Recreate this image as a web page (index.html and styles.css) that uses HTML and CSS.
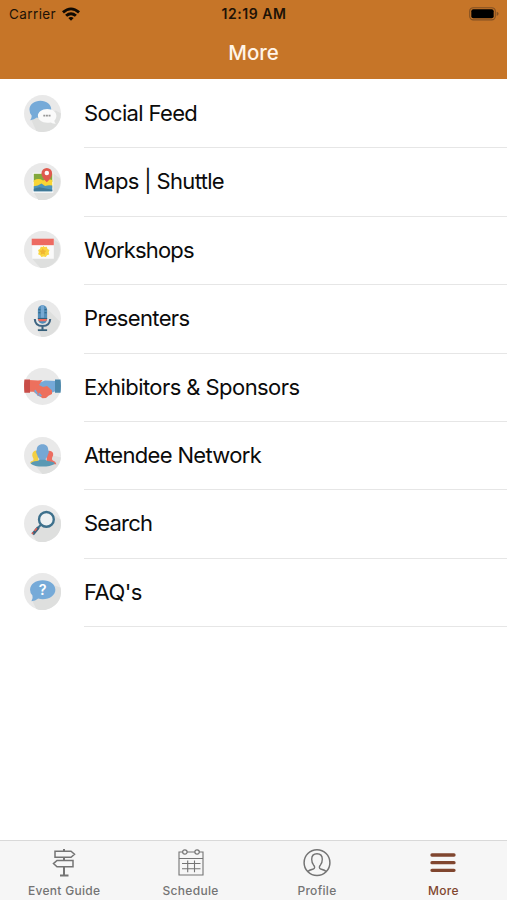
FILE: index.html
```
<!DOCTYPE html>
<html lang="en">
<head>
<meta charset="utf-8">
<title>More</title>
<link rel="stylesheet" href="styles.css">
</head>
<body>
<div class="screen">
  <header class="header">
    <div class="status">
      <div class="carrier"><span>Carrier</span>
        <svg class="wifi" viewBox="0 0 18 14"><path d="M0 4.300Q9-3.500 18 4.300L16.100 6.400Q9 .3 1.900 6.400ZM3.100 7.700Q9 2.800 14.900 7.700L12.900 9.800Q9 6.600 5.100 9.800ZM6.300 11Q9 8.900 11.700 11L9 13.800Z"/></svg>
      </div>
      <span class="time">12:19 AM</span>
      <svg class="battery" viewBox="0 0 30 14"><rect x=".7" y=".7" width="25.600" height="12.200" rx="3.600" fill="none" stroke="#825023" stroke-width="1.100"/><rect x="2.300" y="2.300" width="22.400" height="9" rx="2" fill="#000"/><path d="M27.700 4.700Q29.600 5.300 29.600 6.800T27.700 8.900Z" fill="#825023"/></svg>
    </div>
    <h1 class="title">More</h1>
  </header>
  <ul class="list">
    <li class="row"><svg class="icon" viewBox="0 0 36 36"><circle class="disc" cx="18" cy="18" r="18"/><path class="shade" d="M31 15 36 18A18 18 0 0 1 12 35L7 24Z"/><path class="blue" d="M16 5.500c6 0 10.500 3.600 10.500 8.400S22 22.500 16 22.500q-2 0-3.500-.5-2.500 2.300-6.500 2.500 1.600-2 1.500-4.300Q5.300 17.700 5.300 14C5.300 9.100 10 5.500 16 5.500Z"/><path class="white" d="M22.500 13.500c5.300 0 9 2.800 9 6.700 0 2-.8 3.700-2 4.800q0 1.600 1.500 3-3 0-5-1.300-1.500.4-3.500.4c-5 0-9-2.800-9-6.800s4-6.800 9-6.800Z"/><path d="M18.800 20h7" stroke="#969696" stroke-width="1.700" stroke-dasharray="1.900 .650"/></svg><span class="label l1">Social Feed</span></li>
    <li class="row"><svg class="icon" viewBox="0 0 36 36"><circle class="disc" cx="18" cy="18" r="18"/><path class="shade" d="M27 9 35 15A18 18 0 0 1 14 36L9 28Z"/><path class="white" d="M8.500 9.500h20V29h-20Z"/><path fill="#82a83d" d="M9.500 10.500h18v8h-18Z"/><path fill="#f9d535" d="M9.500 17q4.500-2.800 9 0 4-2 9-.5v7.500h-18Z"/><path fill="#4d94ba" d="M9.500 22.500q4 0 7.500-2.500l3.500 2.400q3.500-1.500 7-.4v5.500h-18Z"/><path fill="#3e7897" d="m9.500 25 5.500-1.500 12.500 2.500v1.500h-18Z"/><path fill="#df594e" d="M22.200 18.700q-5.200-5-5.200-8.600a5.200 5.200 0 0 1 10.400 0q0 3.600-5.200 8.600Z"/><circle class="white" cx="22.200" cy="9.800" r="2.200"/></svg><span class="label l2">Maps | Shuttle</span></li>
    <li class="row"><svg class="icon" viewBox="0 0 36 36"><circle class="disc" cx="18" cy="18" r="18"/><path class="shade" d="m29 8 5 4A18 18 0 0 1 16 36l-8-9Z"/><path class="white" d="M8 8h21v19H8Z"/><path fill="#ed6a61" d="M7.500 7.500h21.500v6.300H7.500Z"/><path fill="#f9d642" d="m18.300 14.200 1.700 1.300 2.200-.2.700 2.100 1.900 1.200-.8 2 .5 2.200-2.100.7-1.200 1.900-2.100-.6-2.200.6-1.100-1.900-2.100-.8.700-2.100-.7-2 1.800-1.200.8-2.100 2.200.2Z"/><path fill="#f0b632" d="m18.300 16.700 1.100 2.100 2.400.4-1.700 1.700.4 2.300-2.200-1.100-2.100 1.100.4-2.300-1.700-1.700 2.300-.4Z"/></svg><span class="label l3">Workshops</span></li>
    <li class="row"><svg class="icon" viewBox="0 0 36 36"><circle class="disc" cx="18" cy="18" r="18"/><path class="shade" d="m23 9 12 12A18 18 0 0 1 17 36l-4-7Z"/><path fill="none" stroke="#3e6482" stroke-width="2" d="M10.500 18.500q.3 6.800 7.500 6.800t7.500-6.800M18 25v4"/><path fill="#345f7a" d="M13.500 28.500h9v1.700h-9Z"/><rect x="13.500" y="5" width="9" height="18" rx="4.500" fill="#528db9"/><path fill="#77a9d3" d="M16.500 5.200h3v12h-3Z"/><path fill="#2e617f" d="M14 9h2v1h-2Zm0 3h2v1h-2Zm6-3h2v1h-2Zm0 3h2v1h-2Z"/><path fill="#ed6b5d" d="M13.500 18h9q-.2 2-1.200 2.700h-6.600q-1-.7-1.200-2.700Z"/><path d="M13.500 18h9" stroke="#345f7a"/></svg><span class="label l4">Presenters</span></li>
    <li class="row"><svg class="icon" viewBox="0 0 37 37"><circle class="disc" cx="18.500" cy="18.500" r="18.500"/><path fill="#75a9d9" d="m15 15 6-2.500 11 .5v10l-5 2-7 5-7-2.500Z"/><path fill="#ed705d" d="m5 12 9 .5 4.500-.5L15 17l4 2 4-1 5 4.500v3.500l-3.500 1.700-2.500 2.200-3.500.4-9-6.500H5Z"/><path fill="#c94d48" d="M.4 11.500H6v13.200H.4Q-.3 18 .4 11.500Z"/><path fill="#4b87ab" d="M31 11.500h5.600q.7 6.500 0 13.200H31Z"/><path d="m10 23 1.500-1.500 2.500 4-1.500 1Zm4 3 1.500-1.300 2.500 3-1.500 1Z" fill="#75a9d9"/></svg><span class="label l5">Exhibitors &amp; Sponsors</span></li>
    <li class="row"><svg class="icon" viewBox="0 0 36 36"><circle class="disc" cx="18" cy="18" r="18"/><path class="shade" d="m28 18 8 2A18 18 0 0 1 18 36l-7-8Z"/><path fill="#f4d044" d="M10 13.500q3-1 4 2v10H6q0-2 3-2.700.8-1-.5-3Q7 15.500 10 13.500Z"/><path fill="#ec6d60" d="M22 15.500q1-3 4.500-1.700 3.300 1.700 1 6-1 2.200.5 3 3 .7 3.500 3.700h-9.500Z"/><path fill="#75a7d4" d="M18 7c3.700 0 5.800 2.400 5.600 6 .9.300.9 2.200-.4 4.200q-.6 3-2 4v2.800h-6.400v-2.800q-1.500-1.300-2-4c-1.300-2-1.300-3.900-.4-4.200C12.200 9.400 14.300 7 18 7Z"/><path fill="#5a99b3" d="M6.500 26q.4-2.200 6.500-2.700l2.500-1.200h5l2.500 1.200q6.500.7 7 2.700-4.500 2.800-12 2.800T6.500 26Z"/></svg><span class="label l6">Attendee Network</span></li>
    <li class="row"><svg class="icon" viewBox="0 0 36 36"><circle class="disc" cx="18" cy="18" r="18"/><path class="shade" d="m29 10 6.500 4A18 18 0 0 1 12 35l-4-6Z"/><circle cx="21.800" cy="14" r="7.200" fill="#eef1f2" stroke="#3d708c" stroke-width="2.300"/><path d="m16.500 19.300-3.300 3.300" stroke="#3d708c" stroke-width="2"/><path d="M14 21.800 8.500 28.500" stroke="#3b617a" stroke-width="3"/><path d="m12.500 22.700-2.200 2.600m-1.400 1.400-1.100 1.400" stroke="#df6157" stroke-width="1.600"/></svg><span class="label l7">Search</span></li>
    <li class="row"><svg class="icon" viewBox="0 0 36 36"><circle class="disc" cx="18" cy="18" r="18"/><path class="shade" d="m29 12 6.500 2A18 18 0 0 1 12 35l-4-8Z"/><path class="blue" d="M18.200 7c7 0 12.300 4 12.300 9.200s-5.300 9.300-12.300 9.300q-2.200 0-4.400-.7-2.800 2.500-6.600 2.700 1.900-2.600 1-5.500-2.300-2.500-2.300-5.800C5.900 11 11.200 7 18.200 7Z"/><text class="qmark" x="18.200" y="21.500">?</text></svg><span class="label l8">FAQ's</span></li>
  </ul>
  <nav class="tabs">
    <a class="tab"><svg class="tab-icon" viewBox="0 0 28 28"><path d="M14 0v2M14 8.500v2.500M14 18v8M10 26.500h8.500" stroke-width="2"/><path d="M5 2.200h16l3.500 3-3.500 3H5ZM23 11.500H7L3.500 14.600 7 17.700h16Z" stroke-width="1.500"/></svg><span>Event Guide</span></a>
    <a class="tab"><svg class="tab-icon" viewBox="0 0 28 28"><path d="M5.800 3H2v23h24V3h-3.800M10 3h8M2 9.500h24M5 14.500h18.500M5 19.700h18.500M10.700 11.500v11.700M17.500 11.500v11.700" stroke-width="1.100"/><circle cx="7.900" cy="3" r="2.200" stroke-width="1.200"/><circle cx="20.100" cy="3" r="2.200" stroke-width="1.200"/></svg><span>Schedule</span></a>
    <a class="tab"><svg class="tab-icon" viewBox="0 0 28 28"><circle cx="14" cy="13.700" r="12.900" stroke-width="1.500"/><path d="M4.800 22.500q1-1.200 5.500-2.500c1.900-.6 1.600-2.700.2-4.100-1.200-1.500-1.800-3.600-1.800-5.600 0-3.500 2-5.500 5.300-5.500s5.300 2 5.300 5.500c0 2-.6 4.100-1.800 5.600-1.400 1.400-1.700 3.500.2 4.100q4.500 1.300 5.500 2.500" stroke-width="1.400"/></svg><span>Profile</span></a>
    <a class="tab active"><svg class="tab-icon" viewBox="0 0 28 28"><path d="M3 6h22M3 13.700h22M3 21.300h22" stroke-width="3.300" stroke-linecap="round"/></svg><span>More</span></a>
  </nav>
</div>
</body>
</html>
```
FILE: styles.css
```
* { box-sizing: border-box; }
body { margin: 0; background: #fff; color: #0b0b0b; font-family: Inter, "Liberation Sans", sans-serif; }
.screen { display: flex; flex-direction: column; height: 900px; width: 507px; overflow: hidden; }
.header { height: 79px; flex: none; background: #c67528; }
.status { display: grid; grid-template-columns: 1fr auto 1fr; align-items: center; height: 27px; padding: 0 8px 0 9px; color: #1d1206; font-size: 13.5px; }
.carrier { display: flex; align-items: center; gap: 6px; letter-spacing: .4px; }
.wifi { width: 18px; height: 14px; fill: #100a03; }
.time { font-weight: 600; font-size: 14px; letter-spacing: .55px; }
.battery { width: 30px; height: 14px; justify-self: end; }
.title { margin: 0; height: 50px; line-height: 51px; text-align: center; font-size: 20.5px; font-weight: 500; letter-spacing: -.1px; color: #fff4e8; }
.list { flex: 1; list-style: none; margin: 0; padding: 1px 0 0; }
.row { display: flex; align-items: center; height: 68.4px; padding-left: 24px; }
.icon { flex: none; width: 37px; height: 37px; margin: 0 23px 2px 0; }
.label { flex: 1; align-self: stretch; line-height: 67.5px; border-bottom: 1.5px solid #e6e6e6; font-size: 22px; letter-spacing: -.65px; white-space: nowrap; }
.l3 { letter-spacing: -.85px; }
.l5 { letter-spacing: -.57px; }
.l6 { letter-spacing: -.68px; }
.l7 { letter-spacing: -.8px; }
.l8 { letter-spacing: -.5px; }
.disc { fill: #e9e9e9; }
.shade { fill: #dedfde; }
.blue { fill: #76aad8; }
.white { fill: #fafafa; }
.qmark { fill: #fff; font-size: 14px; font-weight: 600; text-anchor: middle; }
.tabs { flex: none; display: grid; grid-template-columns: repeat(4, 126.4px); height: 60px; padding-left: 1px; background: #f6f6f6; border-top: 1.5px solid #d9d9d9; }
.tab { display: flex; flex-direction: column; align-items: center; padding-top: 8px; color: #747474; font-size: 12px; line-height: 16px; font-weight: 500; letter-spacing: .3px; gap: 6px; }
.tab-icon { width: 28px; height: 28px; fill: none; stroke: currentColor; }
.active { color: #80462f; }
```
